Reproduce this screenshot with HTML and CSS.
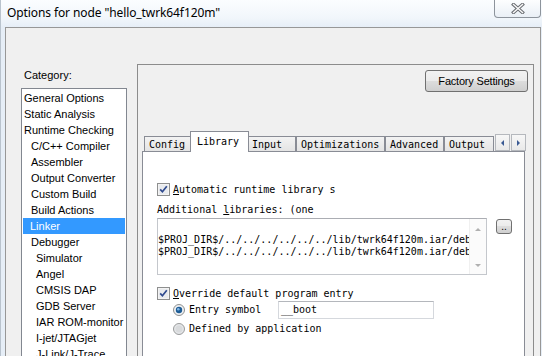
FILE: index.html
```html
<!DOCTYPE html>
<html lang="en">
<head>
<meta charset="utf-8">
<title>Options for node "hello_twrk64f120m"</title>
<link rel="stylesheet" href="styles.css">
</head>
<body>
<div class="window">
	<header class="titlebar">
		<h1>Options for node "hello_twrk64f120m"</h1>
		<button class="close" type="button" aria-label="Close">
			<svg width="14" height="11" viewBox="0 0 14 11">
				<path d="M2.5 1.5 L11.5 9.5 M11.5 1.5 L2.5 9.5" stroke="#6b6e73" stroke-width="3.4" stroke-linecap="square" fill="none"/>
				<path d="M2.5 1.5 L11.5 9.5 M11.5 1.5 L2.5 9.5" stroke="#fbfbfb" stroke-width="1.4" stroke-linecap="square" fill="none"/>
			</svg>
		</button>
	</header>

	<div class="client">
		<aside class="category">
			<div class="caption">Category:</div>
			<ul class="list">
				<li>General Options</li>
				<li>Static Analysis</li>
				<li>Runtime Checking</li>
				<li class="sub">C/C++ Compiler</li>
				<li class="sub">Assembler</li>
				<li class="sub">Output Converter</li>
				<li class="sub">Custom Build</li>
				<li class="sub">Build Actions</li>
				<li class="sub selected">Linker</li>
				<li class="sub">Debugger</li>
				<li class="sub2">Simulator</li>
				<li class="sub2">Angel</li>
				<li class="sub2">CMSIS DAP</li>
				<li class="sub2">GDB Server</li>
				<li class="sub2">IAR ROM-monitor</li>
				<li class="sub2">I-jet/JTAGjet</li>
				<li class="sub2">J-Link/J-Trace</li>
			</ul>
		</aside>

		<section class="panel">
			<div class="panel-top">
				<button class="btn factory" type="button">Factory Settings</button>
			</div>

			<div class="tabs">
				<div class="tab tab-config">Config</div>
				<div class="tab tab-library active">Library</div>
				<div class="tab tab-input">Input</div>
				<div class="tab tab-optim">Optimizations</div>
				<div class="tab tab-adv">Advanced</div>
				<div class="tab tab-output">Output</div>
				<div class="tab-scroll">
					<span class="arrow left"></span>
					<span class="arrow right"></span>
				</div>
			</div>

			<div class="page">
				<div class="check-row">
					<svg class="checkbox" width="13" height="13" viewBox="0 0 13 13">
						<rect x="0.5" y="0.5" width="12" height="12" fill="#f3f3f3" stroke="#8e8f8f"/>
						<rect x="2" y="2" width="9" height="9" fill="#e9ebee"/>
						<path d="M3.2 6.4 L5.4 8.8 L9.8 3.2" fill="none" stroke="#2f4a8e" stroke-width="1.7"/>
					</svg>
					<span><u>A</u>utomatic runtime library s</span>
				</div>

				<div class="field-label">Additional <u>l</u>ibraries: (one</div>

				<div class="lib-row">
					<div class="textbox">
						<div class="lines">$PROJ_DIR$/../../../../../../lib/twrk64f120m.iar/debug
$PROJ_DIR$/../../../../../../lib/twrk64f120m.iar/debug</div>
						<div class="vscroll">
							<span class="tri up"></span>
							<span class="tri down"></span>
						</div>
					</div>
					<button class="btn browse" type="button">..</button>
				</div>

				<div class="check-row override">
					<svg class="checkbox" width="13" height="13" viewBox="0 0 13 13">
						<rect x="0.5" y="0.5" width="12" height="12" fill="#f3f3f3" stroke="#8e8f8f"/>
						<rect x="2" y="2" width="9" height="9" fill="#e9ebee"/>
						<path d="M3.2 6.4 L5.4 8.8 L9.8 3.2" fill="none" stroke="#2f4a8e" stroke-width="1.7"/>
					</svg>
					<span><u>O</u>verride default program entry</span>
				</div>

				<div class="radio-row entry">
					<svg class="radio" width="12" height="12" viewBox="0 0 12 12">
						<circle cx="6" cy="6" r="5.5" fill="#eef0f2" stroke="#8e8f8f"/>
						<circle cx="6" cy="6" r="3.2" fill="#1d5c96"/>
						<circle cx="5.3" cy="5.2" r="1.3" fill="#7fb6e6"/>
					</svg>
					<span class="radio-label">Entry symbol</span>
					<div class="input">__boot</div>
				</div>

				<div class="radio-row">
					<svg class="radio" width="12" height="12" viewBox="0 0 12 12">
						<circle cx="6" cy="6" r="5.5" fill="#e4e6e8" stroke="#9a9b9c"/>
						<circle cx="6" cy="6" r="3.5" fill="#d8dadc"/>
					</svg>
					<span>Defined by application</span>
				</div>
			</div>
		</section>
	</div>
</div>
</body>
</html>
```

FILE: styles.css
```css
* {
	box-sizing: border-box;
}
html, body {
	margin: 0;
	height: 100%;
	overflow: hidden;
}
body {
	background: linear-gradient(180deg, #fbfdff 0, #f1f6fb 18px, #e6eef7 27px);
	font: 11px "Liberation Sans", Arial, sans-serif;
	color: #000;
}
.window {
	height: 356px;
	display: flex;
	flex-direction: column;
	border-left: 1px solid #b9c3cd;
}

/* --------------------------------- title bar */

.titlebar {
	height: 27px;
	flex: none;
	display: flex;
	justify-content: space-between;
	align-items: flex-start;
}
.titlebar h1 {
	margin: 0;
	padding: 5px 0 0 6px;
	font: normal 12px/16px "Noto Sans", "Open Sans", sans-serif;
	letter-spacing: -0.1px;
}
.close {
	width: 47px;
	height: 18px;
	margin-right: 1px;
	padding: 0;
	display: flex;
	align-items: center;
	justify-content: center;
	border: 1px solid #8d949c;
	border-top: none;
	border-radius: 0 0 4px 4px;
	background: linear-gradient(180deg, #fdfeff, #eaf0f6);
}

/* --------------------------------- client area */

.client {
	flex: 1;
	margin: 0 1px 0 4px;
	border: 1px solid #979797;
	border-bottom: none;
	background: #f0f0f0;
	display: flex;
	align-items: flex-start;
	overflow: hidden;
}

.category {
	flex: none;
	padding: 41px 0 0 15px;
}
.caption {
	line-height: 13px;
	margin: 0 0 6px 3px;
}
.list {
	list-style: none;
	margin: 0;
	padding: 1px;
	width: 106px;
	height: 320px;
	border: 1px solid #828790;
	background: #fff;
}
.list li {
	height: 16px;
	line-height: 16px;
	padding-left: 1px;
	white-space: nowrap;
}
.list li.sub {
	padding-left: 8px;
}
.list li.sub2 {
	padding-left: 13px;
}
.list li.selected {
	background: #3399ff;
	color: #fff;
	padding-left: 7px;
}

/* --------------------------------- right panel */

.panel {
	flex: none;
	width: 397px;
	height: 330px;
	margin: 36px 0 0 10px;
	border: 1px solid #8c8c8c;
}
.panel-top {
	display: flex;
	justify-content: flex-end;
	padding: 5px 5px 0 0;
}
.btn {
	padding: 0;
	border: 1px solid #707070;
	border-radius: 3px;
	background: linear-gradient(180deg, #f2f2f2 0, #ebebeb 50%, #dddddd 50%, #cfcfcf 100%);
	font: 11px "Liberation Sans", Arial, sans-serif;
	color: #000;
}
.factory {
	width: 103px;
	height: 22px;
	letter-spacing: -0.2px;
}

.tabs {
	display: flex;
	align-items: flex-end;
	height: 20px;
	margin-top: 39px;
	padding-left: 6px;
	font: 10px/13px "DejaVu Sans Mono", "Liberation Mono", monospace;
}
.tab {
	height: 15px;
	padding: 1px 0 0 4px;
	border: 1px solid #898c95;
	border-bottom: none;
	background: linear-gradient(180deg, #f3f3f3, #e4e4e4);
	white-space: nowrap;
	overflow: hidden;
}
.tab.active {
	position: relative;
	z-index: 1;
	height: 21px;
	margin: 0 -2px -1px;
	padding: 3px 0 0 6px;
	background: #fff;
}
.tab-config { width: 48px; }
.tab-library { width: 59px; }
.tab-input { width: 49px; }
.tab-optim { width: 89px; }
.tab-adv { width: 59px; }
.tab-output { width: 50px; }

.tab-scroll {
	display: flex;
	gap: 1px;
	margin-left: 1px;
	height: 17px;
}
.arrow {
	width: 15px;
	height: 17px;
	border: 1px solid #b5b8bd;
	background: linear-gradient(180deg, #f7f7f7, #e9e9e9);
	display: flex;
	align-items: center;
	justify-content: center;
}
.arrow::before {
	content: "";
	border-top: 3px solid transparent;
	border-bottom: 3px solid transparent;
}
.arrow.left::before {
	border-right: 3px solid #3a5a93;
}
.arrow.right::before {
	border-left: 3px solid #3a5a93;
}

/* --------------------------------- tab page */

.page {
	width: 383px;
	height: 220px;
	margin-left: 4px;
	padding: 31px 0 0 14px;
	border: 1px solid #898c95;
	background: #fff;
	font: 10px/12px "DejaVu Sans Mono", "Liberation Mono", monospace;
}
.page u {
	text-underline-offset: 1px;
}

.check-row {
	display: flex;
	align-items: center;
	gap: 3px;
	height: 13px;
}
.checkbox, .radio {
	flex: none;
	display: block;
}
.field-label {
	margin-top: 8px;
}

.lib-row {
	display: flex;
	align-items: flex-start;
	margin-top: 2px;
}
.textbox {
	width: 330px;
	height: 57px;
	display: flex;
	border: 1px solid #c4c7cc;
	border-top-color: #abadb3;
}
.lines {
	flex: 1;
	overflow: hidden;
	white-space: pre;
	padding: 15px 0 0 0;
}
.vscroll {
	width: 17px;
	flex: none;
	display: flex;
	flex-direction: column;
	justify-content: space-between;
	align-items: center;
	padding: 9px 0 7px;
	background: #fbfbfb;
	border-left: 1px solid #f0f0f0;
}
.tri {
	width: 0;
	height: 0;
	border-left: 3px solid transparent;
	border-right: 3px solid transparent;
}
.tri.up {
	border-bottom: 3px solid #b0b0b0;
}
.tri.down {
	border-top: 3px solid #b0b0b0;
}
.browse {
	width: 16px;
	height: 15px;
	margin: 1px 0 0 9px;
	display: flex;
	align-items: flex-end;
	justify-content: center;
	padding-bottom: 2px;
	font-size: 10px;
	line-height: 8px;
}

.override {
	margin-top: 12px;
}
.radio-row {
	display: flex;
	align-items: center;
	gap: 4px;
	margin-left: 16px;
	height: 13px;
	margin-top: 3px;
}
.radio-row.entry {
	height: 18px;
	margin-top: 1px;
}
.radio-label {
	width: 85px;
}
.input {
	width: 156px;
	height: 18px;
	padding: 2px 0 0 2px;
	border: 1px solid #d5d8dd;
	border-top-color: #b4b7bc;
}
```
